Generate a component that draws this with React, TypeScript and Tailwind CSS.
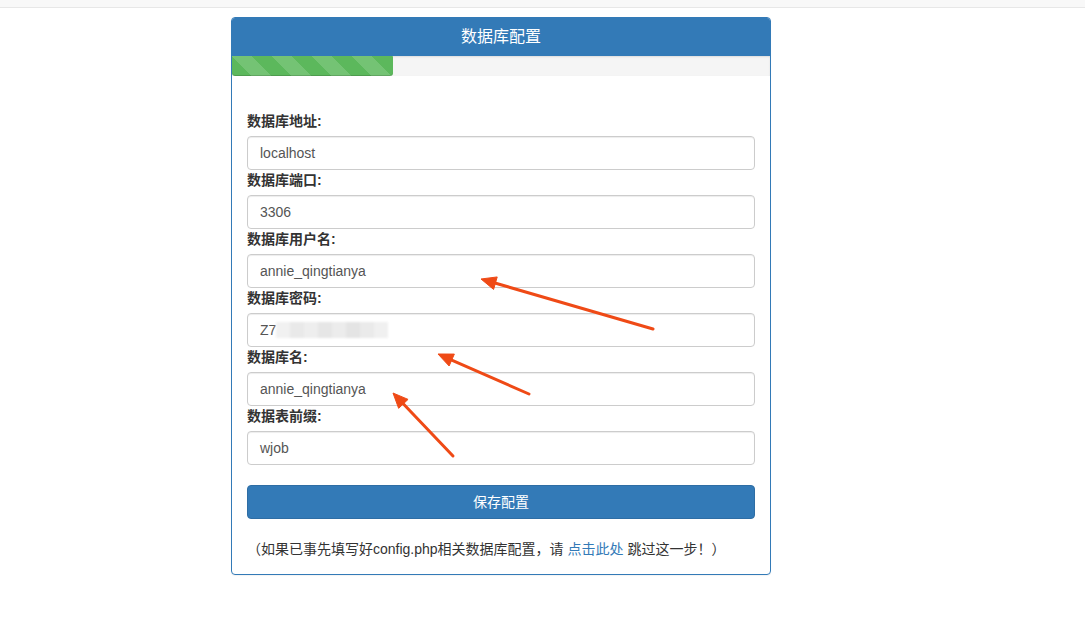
import React from "react"

const fields = [
    {label: "数据库地址:", value: "localhost"},
    {label: "数据库端口:", value: "3306"},
    {label: "数据库用户名:", value: "annie_qingtianya"},
    {label: "数据库密码:", value: "Z7", masked: true},
    {label: "数据库名:", value: "annie_qingtianya"},
    {label: "数据表前缀:", value: "wjob"},
]

// annotation arrows: [tailX, tailY, headX, headY]
const arrows = [
    [653, 329, 481, 279],
    [529, 394, 438, 354],
    [453, 456, 393, 393],
]

function arrowHead(tx: number, ty: number, hx: number, hy: number) {
    const len = Math.hypot(hx - tx, hy - ty)
    const dx = (hx - tx) / len
    const dy = (hy - ty) / len
    const bx = hx - dx * 15
    const by = hy - dy * 15
    const nx = -dy * 6.5
    const ny = dx * 6.5
    return {
        points: `${hx},${hy} ${bx + nx},${by + ny} ${bx - nx},${by - ny}`,
        lineEnd: [hx - dx * 10, hy - dy * 10],
    }
}

// pixelated blocks hiding the rest of the password
const mosaic = ["#f1f1f1", "#e9e9e9", "#eeeeee", "#e6e6e6", "#ececec", "#e4e4e4", "#eaeaea", "#f0f0f0"]

function Field({label, value, masked}: {label: string; value: string; masked?: boolean}) {
    return (
        <div>
            <label className="mb-[5px] block h-5 text-[14px] font-bold leading-5 text-[#333]">{label}</label>
            <div className="flex h-[34px] items-center rounded-[4px] border border-[#ccc] px-3 text-[14px] text-[#555] shadow-[inset_0_1px_1px_rgba(0,0,0,0.075)]">
                <span>{value}</span>
                {masked && (
                    <span className="flex h-4 blur-[1px]">
                        {mosaic.map((c, i) => (
                            <span key={i} className="block h-4 w-[14px]" style={{backgroundColor: c}} />
                        ))}
                    </span>
                )}
            </div>
        </div>
    )
}

export default function App() {
    return (
        <div
            className="relative h-[639px] w-[1085px] overflow-hidden bg-white text-[14px] text-[#333]"
            style={{fontFamily: '"Liberation Sans", "Noto Sans CJK SC", sans-serif'}}
        >
            <div className="h-[8px] border-b border-[#e7e7e7] bg-[#f8f8f8]" />

            <div className="ml-[231px] mt-[9px] w-[540px] overflow-hidden rounded-[4px] border border-[#337ab7] shadow-[0_1px_1px_rgba(0,0,0,0.05)]">
                <div className="flex h-[38px] items-center justify-center bg-[#337ab7] text-[16px] text-white">数据库配置</div>

                <div className="h-5 bg-[#f5f5f5] shadow-[inset_0_1px_2px_rgba(0,0,0,0.1)]">
                    <div className="h-5 w-[30%] rounded-b-[3px] bg-[#5cb85c] bg-[length:40px_40px] bg-[linear-gradient(45deg,rgba(255,255,255,0.15)_25%,transparent_25%,transparent_50%,rgba(255,255,255,0.15)_50%,rgba(255,255,255,0.15)_75%,transparent_75%,transparent)] shadow-[inset_0_-1px_0_rgba(0,0,0,0.15)]" />
                </div>

                <div className="px-[15px] pb-[15px] pt-[35px]">
                    {fields.map((f) => (
                        <Field key={f.label} {...f} />
                    ))}

                    <button className="mt-5 block h-[34px] w-full rounded-[4px] border border-[#2e6da4] bg-[#337ab7] text-[14px] text-white">
                        保存配置
                    </button>

                    <p className="mt-5 h-5 leading-5">
                        （如果已事先填写好config.php相关数据库配置，请 <a className="text-[#337ab7]">点击此处</a> 跳过这一步！）
                    </p>
                </div>
            </div>

            <svg className="pointer-events-none absolute left-0 top-0" width="1085" height="639">
                {arrows.map(([tx, ty, hx, hy], i) => {
                    const h = arrowHead(tx, ty, hx, hy)
                    return (
                        <g key={i} fill="#ef4a16" stroke="#ef4a16">
                            <line x1={tx} y1={ty} x2={h.lineEnd[0]} y2={h.lineEnd[1]} strokeWidth="3" strokeLinecap="round" />
                            <polygon points={h.points} strokeWidth="1" strokeLinejoin="round" />
                        </g>
                    )
                })}
            </svg>
        </div>
    )
}
